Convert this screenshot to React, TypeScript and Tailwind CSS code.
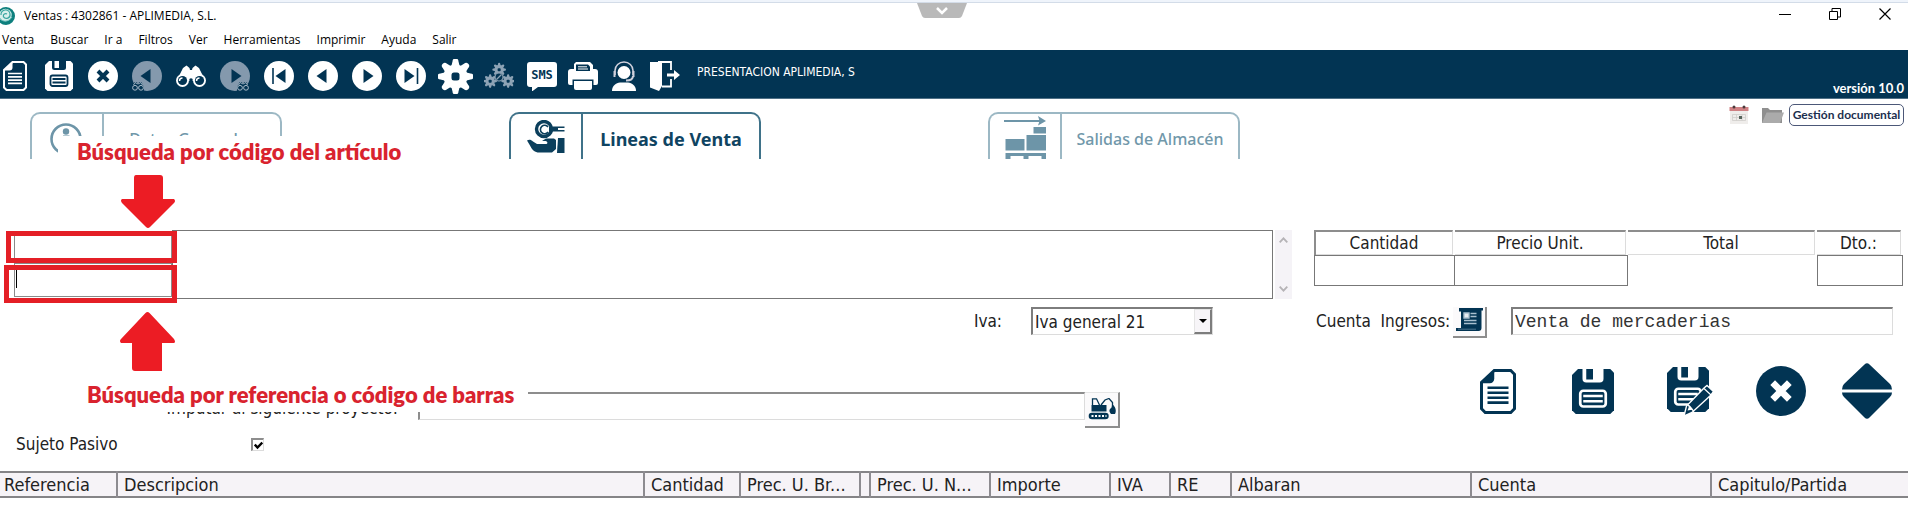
import type { ReactNode } from 'react'

const NAVY = '#023453'

const menus = ['Venta', 'Buscar', 'Ir a', 'Filtros', 'Ver', 'Herramientas', 'Imprimir', 'Ayuda', 'Salir']

const columns = [
  { label: 'Referencia', width: 'w-[117px]' },
  { label: 'Descripcion', width: 'w-[527px]' },
  { label: 'Cantidad', width: 'w-[96px]' },
  { label: 'Prec. U. Br...', width: 'w-[120px]' },
  { label: '', width: 'w-[10px]' },
  { label: 'Prec. U. N...', width: 'w-[120px]' },
  { label: 'Importe', width: 'w-[120px]' },
  { label: 'IVA', width: 'w-[60px]' },
  { label: 'RE', width: 'w-[61px]' },
  { label: 'Albaran', width: 'w-[240px]' },
  { label: 'Cuenta', width: 'w-[240px]' },
  { label: 'Capitulo/Partida', width: '' },
]

/* ---------- Icons ---------- */

function Svg({ children, className = 'size-[30px]', box = '0 0 30 30' }: { children: ReactNode; className?: string; box?: string }) {
  return (
    <svg viewBox={box} className={`block shrink-0 ${className}`} fill="none" aria-hidden="true">
      {children}
    </svg>
  )
}

function LogoIcon() {
  return (
    <Svg className="h-[18px] w-[15px]" box="3 0 15 18">
      <circle cx="9" cy="9" r="9" fill="#0d7f7d" />
      <circle cx="8.5" cy="8" r="6.2" fill="#d9efec" />
      <path d="M4 8a4.5 4.5 0 0 1 9-1 3.6 3.6 0 0 1-6.6 2.6A2.4 2.4 0 0 1 10 7" stroke="#3aa5a0" strokeWidth="1.2" />
      <path d="M3 12c3 3 9 3 12-2" stroke="#7cc7c2" strokeWidth="1" />
    </Svg>
  )
}

function DocIcon({ ink, paper, className, box }: { ink: string; paper: string; className?: string; box?: string }) {
  return (
    <Svg className={className} box={box ?? '-3 0 30 30'}>
      <path d="M9.5 1H20.500L23 3.500V26.500L20.500 29H3.500L1 26.500V9z" fill={paper} stroke={ink} strokeWidth="2" />
      <path d="M9.5 1v5.500a3 3 0 0 1-3 3H1z" fill={ink} />
      <path d="M5 12.500h14M5 15.800h14M5 19.100h14M5 22.400h14" stroke={ink} strokeWidth="1.700" />
    </Svg>
  )
}

function FloppyShape({ ink, paper }: { ink: string; paper: string }) {
  return (
    <>
      <path d="M4 0h21.500L28 2.500v25L25.500 30h-23L0 27.500V4z" fill={ink} />
      <path d="M7 0h14v6.500a2.500 2.500 0 0 1-2.500 2.500h-9A2.500 2.500 0 0 1 7 6.500z" fill={paper} />
      <path d="M9.500 0h4.500v7h-4.500z" fill={ink} />
      <rect x="5.500" y="14.500" width="17" height="10.500" rx="2" fill={ink} stroke={paper} strokeWidth="1.800" />
      <path d="M7.500 18h13M7.500 21.500h13" stroke={paper} strokeWidth="1.800" />
    </>
  )
}

function CrossCircle({ ink, paper, className, thick }: { ink: string; paper: string; className?: string; thick: number }) {
  return (
    <Svg className={className}>
      <circle cx="15" cy="15" r="15" fill={ink} />
      <path d="M10 10l10 10M20 10L10 20" stroke={paper} strokeWidth={thick} />
    </Svg>
  )
}

function SmallBinoculars({ x }: { x: number }) {
  return (
    <g transform={`translate(${x} 20)`}>
      <path d="M0 6.500 2.500 1h2L6 2.500 7.500 1h2L12 6.500V10H0z" fill={NAVY} />
      <circle cx="3" cy="6.800" r="2.400" stroke="#a9bac8" />
      <circle cx="9" cy="6.800" r="2.400" stroke="#a9bac8" />
      <path d="M1.500 4 3 1.500 6 3l3-1.500L10.500 4" stroke="#a9bac8" strokeWidth=".9" />
    </g>
  )
}

function NavIcon({ dir, bar, find }: { dir: 'left' | 'right'; bar?: boolean; find?: boolean }) {
  const left = dir === 'left'
  return (
    <Svg>
      <circle cx="15" cy="15" r="15" fill={find ? '#8499ad' : '#fff'} />
      <path d={left ? 'M18.500 8v14L8.500 15z' : 'M11.500 8v14l10-7z'} fill={NAVY} transform={bar ? `translate(${left ? 3 : -3} 0)` : undefined} />
      {bar && <path d={left ? 'M9 7v16' : 'M21.500 7v16'} stroke={NAVY} strokeWidth="1.600" />}
      {find && <SmallBinoculars x={left ? 0 : 17} />}
    </Svg>
  )
}

function BinocularsIcon() {
  return (
    <Svg>
      <path d="M7 7 10.500 4.500l3 2.500.5 2h2l.5-2 3-2.500L23 7l5.500 11h-27z" fill="#fff" />
      <path d="M11 12h8v8h-8z" fill="#fff" />
      {[6.5, 23.5].map((cx) => (
        <g key={cx}>
          <circle cx={cx} cy="19.500" r="6.500" fill="#fff" />
          <circle cx={cx} cy="19.500" r="4.600" fill={NAVY} />
          <path d={`M${cx - 3} 20a3 3 0 0 1 3-3`} stroke="#fff" strokeWidth="1.500" />
        </g>
      ))}
      <circle cx="15" cy="19" r="1.800" fill={NAVY} />
      <path d="M13 25l2-2 2 2z" fill={NAVY} />
    </Svg>
  )
}

const teeth = [0, 45, 90, 135, 180, 225, 270, 315]

function GearShape({ hole, color }: { hole: string; color: string }) {
  return (
    <>
      {teeth.map((a) => (
        <path key={a} d="M14.500 2.500a3 3 0 0 1 6 0l1.500 6h-9z" transform={`rotate(${a} 17.500 17.500)`} fill={color} />
      ))}
      <circle cx="17.500" cy="17.500" r="12" fill={color} />
      <rect x="13.500" y="13.500" width="8" height="8" rx="2.500" fill={hole} />
    </>
  )
}

function GearsIcon() {
  return (
    <Svg>
      {[[8.5, 2], [-0.5, 13.5], [17.5, 13.5]].map(([x, y]) => (
        <g key={x} transform={`translate(${x} ${y}) scale(.38)`}>
          <GearShape hole={NAVY} color="#8da3b5" />
        </g>
      ))}
      <circle cx="15" cy="16" r="4" fill={NAVY} stroke="#8da3b5" strokeWidth="1.200" />
      <path d="M12.500 18.500l5-5" stroke="#8da3b5" strokeWidth="1.200" />
    </Svg>
  )
}

function SmsIcon() {
  return (
    <Svg>
      <path d="M3 1h24a3 3 0 0 1 3 3v19a3 3 0 0 1-3 3H11l-6 4.500V26H3a3 3 0 0 1-3-3V4a3 3 0 0 1 3-3z" fill="#fff" />
      <text x="15" y="18" textAnchor="middle" fontSize="12" fontWeight="700" fontFamily="DejaVu Sans Mono, monospace" fill={NAVY}>
        SMS
      </text>
    </Svg>
  )
}

function PrinterIcon() {
  return (
    <Svg>
      <path d="M6 9V3l2-2h14l3 3v5" fill="#fff" />
      <path d="M3 8h24a3 3 0 0 1 3 3v11a2 2 0 0 1-2 2H2a2 2 0 0 1-2-2V11a3 3 0 0 1 3-3z" fill="#fff" />
      <path d="M8 3.500h12l2 2V10H8z" fill={NAVY} />
      <path d="M10 5.800h9M10 8h10" stroke="#fff" strokeWidth="1" />
      <path d="M4.500 18.500h21V26h-21z" fill={NAVY} />
      <path d="M6 20h18v7a2 2 0 0 1-2 2H8a2 2 0 0 1-2-2z" fill="#fff" />
    </Svg>
  )
}

function AgentIcon() {
  return (
    <Svg>
      <circle cx="15" cy="11.500" r="6.500" fill="#fff" />
      <path d="M6 14V9.500a9 8.500 0 0 1 18 0V14" stroke="#cfd0dc" strokeWidth="1.600" />
      <path d="M5.500 10v6M24.500 10v6M24 15c0 3-3 4.500-7 4.500" stroke="#cfd0dc" strokeWidth="2" />
      <path d="M3 30c0-5.500 4-8 8-8.500h8c4 .5 8 3 8 8.500z" fill="#fff" />
    </Svg>
  )
}

function ExitIcon() {
  return (
    <Svg>
      <path d="M0 1h12v24L9 30 0 26.500z" fill="#fff" />
      <path d="M8 1h13v8M21 18v7.500h-9" stroke="#fff" strokeWidth="1.800" />
      <path d="M17 12.500h7V9l6 5-6 5v-3.500h-7z" fill="#fff" />
    </Svg>
  )
}

function InfoIcon() {
  return (
    <Svg className="size-[36px]" box="0 0 36 36">
      <circle cx="17" cy="17" r="14.500" stroke="#6d95a8" strokeWidth="2.600" />
      <circle cx="17" cy="9.500" r="3.200" fill="#6d95a8" />
      <path d="M14 15h5v12" stroke="#6d95a8" strokeWidth="3" />
    </Svg>
  )
}

function HandKeyIcon() {
  return (
    <Svg className="h-[34px] w-[38px]" box="0 0 38 34">
      <circle cx="17" cy="9" r="7.500" stroke="#0b3f5c" strokeWidth="3.400" />
      <path d="M21 7a4.200 4.200 0 1 0 0 5" stroke="#0b3f5c" strokeWidth="1.600" />
      <path d="M22 6.500h15.500v1.500H31v2h6.500v1.500H26L23 13l-1-2z" fill="#0b3f5c" />
      <path d="M0 20.500c2-1.500 4-1 6 1l4 2.500h9c2 0 2-2.500-.5-3h-3.500l4-2.500h8l2 1.500v9l-4 3.500H12c-4 0-7-2.500-9-7z" fill="#0b3f5c" />
      <path d="M31 18h6.500v15H30z" fill="#0b3f5c" />
    </Svg>
  )
}

function PalletIcon() {
  return (
    <Svg className="h-[46px] w-[42px]" box="0 0 42 46">
      <path d="M0 7h37" stroke="#6d95a8" strokeWidth="2" />
      <path d="M34 2l8 5-8 4.500 1.500-4.500z" fill="#6d95a8" />
      <path d="M29.500 13H42v6.500H29.500zM22.500 21H42v15.500H22.500zM1.500 25h19v11.500h-19zM1.500 39H42v6h-4.500v-3h-13v3h-5v-3h-13v3h-5z" fill="#6d95a8" />
    </Svg>
  )
}

function CalendarIcon() {
  return (
    <Svg className="size-[20px]" box="0 0 20 20">
      <path d="M1 4h18v15H1z" fill="#efedeb" />
      <path d="M.500 2h19v4H.500z" fill="#cf8083" />
      <circle cx="5" cy="2" r="1.500" fill="#4a3b3d" />
      <circle cx="15" cy="2" r="1.500" fill="#4a3b3d" />
      <path d="M3.500 9.500h13v6h-13zM7.500 9.500v6M13 9.500v6M3.500 12.500h13" stroke="#cfcdca" strokeWidth=".8" />
      <path d="M10 11h3v3h-3z" fill="#56645c" />
    </Svg>
  )
}

function FolderIcon() {
  return (
    <Svg className="h-[16px] w-[22px]" box="0 0 22 16">
      <path d="M0 1h6l2 2h12v13H0z" fill="#8f8f8f" />
      <path d="M4.500 5.500H22L18 16H0z" fill="#ababab" />
    </Svg>
  )
}

function LedgerIcon() {
  return (
    <Svg className="h-[23px] w-[27px]" box="0 0 27 23">
      <path d="M3 0h24v2.500h-1.500V20c0 2-1 3-3 3H0v-3h5V3.500H3z" fill={NAVY} />
      <path d="M8 5h5v5H8zM14.500 5.500h6M14.500 8.500h6M8 12.500h12.500M8 15.500h12.500" stroke="#a9c0cf" strokeWidth="1.400" fill="#e7eef3" />
      <path d="M2 21.200h18" stroke="#5f87a0" strokeWidth=".8" />
    </Svg>
  )
}

function ExcavatorIcon() {
  return (
    <Svg className="h-[22px] w-[28px]" box="0 0 28 22">
      <path d="M3.500 7h15v6.500h-15z" fill={NAVY} />
      <path d="M4.500 7V.8h4L11.500 7M13 7l4-5 4-1.500 3.500 4v5" stroke={NAVY} strokeWidth="1.300" />
      <path d="M24 6c4 3 4.500 7 3 10h-4c-2-2-2-4-.5-5.500 1.500-1 1.500-2.500 1.500-4.500z" fill={NAVY} />
      <rect x=".7" y="14.700" width="20" height="6.600" rx="3.300" fill={NAVY} />
      <path d="M3.500 18h15" stroke="#fff" strokeWidth="2" strokeDasharray="2 1.500" />
    </Svg>
  )
}

function SavePenIcon() {
  return (
    <Svg className="size-[48px]" box="0 0 48 48">
      <g transform="scale(1.5)">
        <FloppyShape ink={NAVY} paper="#fff" />
      </g>
      <path d="M37 21l3-2.500 6.500 6-2.500 3.500-19 17.500-8 3.500 2.500-10z" fill={NAVY} stroke="#fff" strokeWidth="1.400" />
      <path d="M37 21.500l7 6.500M21 38l6 6.500" stroke="#fff" strokeWidth="1.200" />
      <path d="M22.500 38l-2 5.500 5.500-1z" fill="#fff" />
    </Svg>
  )
}

/* ---------- Pieces ---------- */

function ToolButton({ label, children }: { label: string; children: ReactNode }) {
  return (
    <button type="button" aria-label={label} className="flex w-[44px] shrink-0 justify-center">
      {children}
    </button>
  )
}

function Tab({ label, icon, active }: { label: string; icon: ReactNode; active?: boolean }) {
  return (
    <button
      type="button"
      className={`flex h-[47px] w-[252px] shrink-0 overflow-hidden rounded-t-[10px] border-2 border-b-0 font-['Noto_Sans'] ${
        active ? 'border-[#3f7289] text-[18px] font-bold text-[#0f4462]' : 'border-[#9cb8c4] text-[16px] font-medium text-[#7198aa]'
      }`}
    >
      <span className={`flex h-full w-[72px] shrink-0 justify-center border-r-2 ${active ? 'border-[#3f7289]' : 'border-[#9cb8c4]'}`}>{icon}</span>
      <span className="flex h-full flex-1 items-center justify-center pt-1 whitespace-nowrap">{label}</span>
    </button>
  )
}

function HeadLabel({ label, id }: { label: string; id: string }) {
  return (
    <label
      htmlFor={id}
      className="mr-0.5 flex h-[25px] items-center justify-center border-t-2 border-r border-b border-t-[#8d8d8d] border-r-[#dcdcdc] border-b-[#dcdcdc]"
    >
      {label}
    </label>
  )
}

function Caption({ children, className }: { children: ReactNode; className: string }) {
  return (
    <p className={`absolute z-10 bg-white font-['Lato'] text-[22px] font-extrabold whitespace-nowrap text-[#d9232e] ${className}`}>
      {children}
    </p>
  )
}

export default function App() {
  return (
    <div className="min-h-screen overflow-hidden bg-white font-['DejaVu_Sans_Condensed','Noto_Sans',sans-serif] text-[17px] leading-[22px] text-[#222]">
      {/* Title bar */}
      <header className="relative border-t-2 border-[#eff4fb] font-['Open_Sans',sans-serif] text-[12px] leading-[16px] text-black">
        <div className="flex h-[27px] items-center border-t border-[#d3dce8]">
          <LogoIcon />
          <h1 className="ml-[9px]">Ventas : 4302861 - APLIMEDIA, S.L.</h1>
          <div className="ml-auto flex items-center gap-[38px] pr-[17px] pb-1">
            <button type="button" aria-label="Minimizar">
              <Svg className="size-[12px]" box="0 0 12 12"><path d="M0 6.500h12" stroke="#000" /></Svg>
            </button>
            <button type="button" aria-label="Restaurar">
              <Svg className="size-[12px]" box="0 0 12 12"><path d="M.5 3.500h8v8h-8zM3 3V.5h8.500V9H9" stroke="#000" /></Svg>
            </button>
            <button type="button" aria-label="Cerrar">
              <Svg className="size-[12px]" box="0 0 12 12"><path d="M.5.5l11 11M11.500.5l-11 11" stroke="#000" strokeWidth="1.200" /></Svg>
            </button>
          </div>
        </div>
        <Svg className="absolute top-px left-[917px] h-[15px] w-[50px]" box="0 0 50 15">
          <path d="M0 0h50l-5 13q-1 2-3 2H8q-2 0-3-2z" fill="#b9b9b9" />
          <path d="M20 5l5 5 5-5" stroke="#fff" strokeWidth="2.500" />
        </Svg>
        <nav className="flex h-[21px] items-center gap-[16px] pl-[2px]">
          {menus.map((m) => (
            <button key={m} type="button">{m}</button>
          ))}
        </nav>
      </header>

      {/* Toolbar */}
      <div className="flex h-[49px] items-center border-b border-[#4f7086] bg-[#023453] pt-1 pr-1 text-white">
        <div className="-ml-[7px] flex items-center">
          <ToolButton label="Nuevo"><DocIcon ink="#fff" paper={NAVY} /></ToolButton>
          <ToolButton label="Guardar"><Svg box="-1 0 30 30"><FloppyShape ink="#fff" paper={NAVY} /></Svg></ToolButton>
          <ToolButton label="Cancelar"><CrossCircle ink="#fff" paper={NAVY} thick={4} /></ToolButton>
          <ToolButton label="Buscar anterior"><NavIcon dir="left" find /></ToolButton>
          <ToolButton label="Buscar"><BinocularsIcon /></ToolButton>
          <ToolButton label="Buscar siguiente"><NavIcon dir="right" find /></ToolButton>
          <ToolButton label="Primero"><NavIcon dir="left" bar /></ToolButton>
          <ToolButton label="Anterior"><NavIcon dir="left" /></ToolButton>
          <ToolButton label="Siguiente"><NavIcon dir="right" /></ToolButton>
          <ToolButton label="Último"><NavIcon dir="right" bar /></ToolButton>
          <ToolButton label="Configuración">
            <Svg className="size-[35px]" box="0 0 35 35"><GearShape hole={NAVY} color="#fff" /></Svg>
          </ToolButton>
          <ToolButton label="Procesos"><GearsIcon /></ToolButton>
        </div>
        <div className="flex items-center gap-[11px] pl-[6px]">
          <button type="button" aria-label="SMS"><SmsIcon /></button>
          <button type="button" aria-label="Imprimir"><PrinterIcon /></button>
          <button type="button" aria-label="Soporte"><AgentIcon /></button>
          <button type="button" aria-label="Salir"><ExitIcon /></button>
        </div>
        <span className="ml-[17px] pb-2 text-[12px] leading-[16px]">PRESENTACION APLIMEDIA, S</span>
        <span className="ml-auto self-end pb-0.5 font-['Lato'] text-[13px] leading-[16px] font-bold">versión 10.0</span>
      </div>

      <main className="relative">
        {/* Section tabs */}
        <div className="flex items-start pt-[5px] pr-1">
          <nav className="flex flex-1 gap-[227px] pt-[8px] pl-[30px]">
            <Tab label="Datos Generales" icon={<span className="pt-2"><InfoIcon /></span>} />
            <Tab label="Lineas de Venta" active icon={<span className="pt-[6px]"><HandKeyIcon /></span>} />
            <Tab label="Salidas de Almacén" icon={<PalletIcon />} />
          </nav>
          <div className="flex items-center">
            <button type="button" aria-label="Calendario"><CalendarIcon /></button>
            <button type="button" aria-label="Carpeta" className="ml-[13px]"><FolderIcon /></button>
            <button
              type="button"
              className="ml-[5px] h-[22px] w-[115px] rounded-[5px] border border-[#4c5878] font-['Lato'] text-[12px] leading-[18px] font-bold whitespace-nowrap text-[#1c2f4e]"
            >
              Gestión documental
            </button>
          </div>
        </div>

        {/* Article line */}
        <section className="flex items-start pt-[71px] pr-[5px] pl-[14px]">
          <div className="relative w-[158px] shrink-0 pt-[2px]">
            <input aria-label="Código del artículo" className="block h-[32px] w-full border border-[#8a8a8a] px-1" />
            <input aria-label="Referencia o código de barras" className="block h-[33px] w-full border border-t-0 border-[#8a8a8a] px-1" />
            <span className="absolute top-[40px] left-[2px] h-[18px] w-px bg-black" />
            <span className="pointer-events-none absolute top-px -left-2 h-[32px] w-[171px] border-[5px] border-[#e41f26]" />
            <span className="pointer-events-none absolute top-[35px] -left-[10px] h-[38px] w-[173px] border-[5px] border-[#e41f26]" />
          </div>
          <textarea aria-label="Descripción" className="block h-[69px] flex-1 resize-none border border-[#777] px-1" />
          <div className="ml-0.5 flex h-[69px] w-[17px] flex-col items-center justify-between bg-[#f5f3f7] py-[7px]">
            <Svg className="h-[6px] w-[9px]" box="0 0 9 6"><path d="M.7 5.300l3.800-4 3.800 4" stroke="#b5b3b6" strokeWidth="1.800" /></Svg>
            <Svg className="h-[6px] w-[9px]" box="0 0 9 6"><path d="M.7.700l3.800 4 3.800-4" stroke="#b5b3b6" strokeWidth="1.800" /></Svg>
          </div>
          <div className="ml-[22px] grid grid-cols-[141px_173px_189px_86px]">
            <div className="border-l-2 border-[#8d8d8d]"><HeadLabel label="Cantidad" id="cantidad" /></div>
            <HeadLabel label="Precio Unit." id="precio" />
            <HeadLabel label="Total" id="total" />
            <HeadLabel label="Dto.:" id="dto" />
            <input id="cantidad" className="h-[31px] w-full border border-[#777] px-1" />
            <input id="precio" className="h-[31px] w-full border border-l-0 border-[#777] px-1" />
            <output id="total" />
            <input id="dto" className="h-[31px] w-full border border-[#777] px-1" />
          </div>
        </section>

        {/* Tax and account */}
        <section className="flex items-start pt-[8px] pr-[15px]">
          <div className="flex flex-1 items-center justify-end">
            <label htmlFor="iva" className="mr-[29px]">Iva:</label>
            <div className="relative">
              <select id="iva" className="block h-[28px] w-[182px] appearance-none border border-t-2 border-l-2 border-[#dcdcdc] border-t-[#7d7d7d] border-l-[#7d7d7d] pl-0.5">
                <option>Iva general 21</option>
              </select>
              <span className="pointer-events-none absolute top-[2px] right-px flex h-[25px] w-[18px] items-center justify-center border border-r-2 border-b-2 border-[#e5e5e5] border-r-[#7d7d7d] border-b-[#7d7d7d] bg-[#f7f5f8]">
                <Svg className="h-[4px] w-[8px]" box="0 0 8 4"><path d="M0 0h8L4 4z" fill="#000" /></Svg>
              </span>
            </div>
          </div>
          <div className="ml-[103px] flex w-[577px] items-start">
            <label htmlFor="cuenta" className="w-[137px] pt-[3px] whitespace-pre">Cuenta  Ingresos:</label>
            <button type="button" aria-label="Buscar cuenta" className="flex h-[31px] w-[34px] justify-center border-r-2 border-b-2 border-[#8d8d8d] bg-[#fbfafb] pt-px">
              <LedgerIcon />
            </button>
            <input
              id="cuenta"
              defaultValue="Venta de mercaderias"
              className="ml-[24px] h-[28px] min-w-0 flex-1 border border-t-2 border-l-2 border-[#dcdcdc] border-t-[#7d7d7d] border-l-[#7d7d7d] pl-0.5 font-['Liberation_Mono',monospace] text-[18px] text-[#333]"
            />
          </div>
        </section>

        {/* Project and line actions */}
        <section className="flex items-start pt-[25px] pr-[16px]">
          <div className="flex flex-1 items-start pt-[29px]">
            <label htmlFor="proyecto" className="w-[398px] pt-[5px] text-right">Imputar al siguiente proyecto:</label>
            <input id="proyecto" className="ml-[20px] h-[28px] w-[667px] border border-t-2 border-l-2 border-[#dcdcdc] border-t-[#8d8d8d] border-l-[#8d8d8d] px-1" />
            <button type="button" aria-label="Buscar proyecto" className="flex h-[36px] w-[35px] justify-center border-t border-r-2 border-b-2 border-[#8d8d8d] border-t-[#e5e5e5] bg-[#fbfafb] pt-[5px]">
              <ExcavatorIcon />
            </button>
          </div>
          <div className="flex items-center">
            <button type="button" aria-label="Nueva línea"><DocIcon ink={NAVY} paper="#fff" className="h-[45px] w-[36px]" box="0 0 24 30" /></button>
            <button type="button" aria-label="Guardar línea" className="ml-[56px]">
              <Svg className="h-[45px] w-[42px]" box="0 0 28 30"><FloppyShape ink={NAVY} paper="#fff" /></Svg>
            </button>
            <button type="button" aria-label="Guardar y editar" className="ml-[53px]"><SavePenIcon /></button>
            <button type="button" aria-label="Cancelar línea" className="ml-[41px]"><CrossCircle ink={NAVY} paper="#fff" className="size-[50px]" thick={4} /></button>
            <button type="button" aria-label="Mover línea" className="ml-[36px]">
              <Svg className="h-[56px] w-[50px]" box="0 0 50 56">
                <path d="M22.500 1.500q2.500-2.500 5 0L48 21q2 2 2 5.500H0Q0 23 2 21zM0 29.500h50q0 2.500-2 4.500L27.500 54.500q-2.500 2.500-5 0L2 34q-2-2-2-4.500z" fill={NAVY} />
              </Svg>
            </button>
          </div>
        </section>

        <div className="flex items-center pt-[5px] pb-[16px] pl-[16px]">
          <label htmlFor="sujeto" className="w-[235px]">Sujeto Pasivo</label>
          <span className="relative">
            <input
              id="sujeto"
              type="checkbox"
              defaultChecked
              className="peer block size-[13px] appearance-none border border-t-2 border-l-2 border-[#dcdcdc] border-t-[#8d8d8d] border-l-[#8d8d8d]"
            />
            <Svg className="pointer-events-none invisible absolute top-[3px] left-[3px] size-[9px] peer-checked:visible" box="0 0 9 9">
              <path d="M.8 3.500L3.500 6.500 8.300 1.500" stroke="#000" strokeWidth="2.400" />
            </Svg>
          </span>
        </div>

        {/* Sale lines */}
        <table className="w-full table-fixed border-collapse border-t-2 border-b-2 border-[#858487] bg-[#f6f3f7] text-[18px]">
          <thead>
            <tr>
              {columns.map((c, i) => (
                <th
                  key={i}
                  scope="col"
                  className={`h-[24px] overflow-hidden border-r-2 border-[#8d8b90] p-0 pt-px text-left font-normal whitespace-nowrap last:border-r-0 ${c.width} ${i === 0 ? 'pl-1' : 'pl-[6px]'}`}
                >
                  {c.label}
                </th>
              ))}
            </tr>
          </thead>
        </table>

        {/* Search hints */}
        <Caption className="top-[37px] left-[58px] w-[357px] pl-[19px] leading-[32px]">Búsqueda por código del artículo</Caption>
        <Svg className="absolute top-[76px] left-[121px] h-[54px] w-[54px]" box="0 0 54 54">
          <path d="M15 0h24q3 0 3 3v21h11q2 2 0 4L29 52q-2 2-4 0L1 28q-2-3 0-4h12V3q0-3 2-3z" fill="#ec1c24" />
        </Svg>
        <Svg className="absolute top-[213px] left-[120px] h-[59px] w-[55px]" box="0 0 55 59">
          <path d="M25.500 1q2-2 4 0L54 27q2 3 0 4H42v28H15q-3 0-3-3V31H1q-2-2 0-4z" fill="#ec1c24" />
        </Svg>
        <Caption className="top-[279px] left-[68px] w-[460px] pl-[19px] leading-[34px]">Búsqueda por referencia o código de barras</Caption>
      </main>
    </div>
  )
}
